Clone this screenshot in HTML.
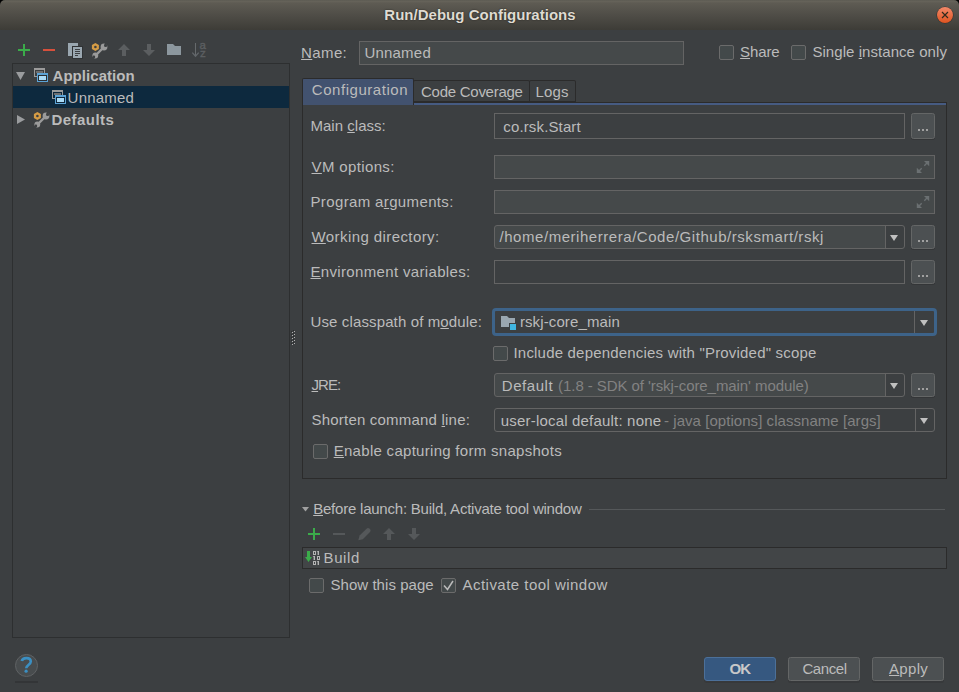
<!DOCTYPE html>
<html><head><meta charset="utf-8"><style>
html,body{margin:0;padding:0;width:959px;height:692px;overflow:hidden;background:#000;}
body{position:relative;font-family:"Liberation Sans", sans-serif;font-size:15px;}
.t{position:absolute;white-space:pre;line-height:20px;font-size:15px;}
.t u{text-decoration:underline;text-underline-offset:1px;text-decoration-thickness:1px;}
.a{position:absolute;box-sizing:border-box;}
svg{position:absolute;overflow:visible;}
</style></head><body>
<!-- title bar -->
<div class="a" style="left:0;top:0;width:959px;height:30px;border-radius:5px 5px 0 0;background:linear-gradient(#58574f 0px,#67645b 1px,#5e5b53 3px,#4e4c46 16px,#3d3c37 30px);"></div>
<!-- body -->
<div class="a" style="left:0;top:30px;width:959px;height:662px;background:#3c3f41"></div>

<!-- tree panel -->
<div class="a" style="left:12px;top:63px;width:278px;height:575px;border:1px solid #2d2f30;"></div>
<div class="a" style="left:13px;top:86px;width:276px;height:22px;background:#0d293e"></div>

<!-- splitter dots -->
<svg width="959" height="692" style="left:0;top:0">
  <g fill="#2a2c2d"><rect x="291" y="331" width="1" height="1"/><rect x="293" y="330" width="1" height="1"/><rect x="291" y="334" width="1" height="1"/><rect x="293" y="333" width="1" height="1"/><rect x="291" y="337" width="1" height="1"/><rect x="293" y="336" width="1" height="1"/><rect x="291" y="340" width="1" height="1"/><rect x="293" y="339" width="1" height="1"/><rect x="291" y="343" width="1" height="1"/><rect x="293" y="342" width="1" height="1"/></g>
  <g fill="#b0b0b0">
    <rect x="292" y="332" width="1" height="1"/><rect x="292" y="335" width="1" height="1"/><rect x="292" y="338" width="1" height="1"/><rect x="292" y="341" width="1" height="1"/><rect x="292" y="344" width="1" height="1"/>
    <rect x="294" y="331" width="1" height="1"/><rect x="294" y="334" width="1" height="1"/><rect x="294" y="337" width="1" height="1"/><rect x="294" y="340" width="1" height="1"/><rect x="294" y="343" width="1" height="1"/>
  </g>
</svg>

<!-- tabs -->
<div class="a" style="left:413px;top:80px;width:117px;height:23px;border:1px solid #2b2b2b;border-bottom:2px solid #2b2b2b;border-radius:2px 2px 0 0;background:#3c3f41"></div>
<div class="a" style="left:529px;top:80px;width:47px;height:23px;border:1px solid #2b2b2b;border-bottom:2px solid #2b2b2b;border-radius:2px 2px 0 0;background:#3c3f41"></div>
<!-- tab panel -->
<div class="a" style="left:302px;top:102px;width:645px;height:377px;border:1px solid #2b2b2b;"></div>
<div class="a" style="left:303px;top:103px;width:643px;height:2px;background:#465b82"></div>
<div class="a" style="left:302px;top:78px;width:112px;height:27px;border-left:1px solid #2b2b2b;border-top:1px solid #2b2b2b;border-right:1px solid #2b2b2b;border-radius:2px 2px 0 0;background:#42526f"></div>

<!-- name field -->
<div class="a" style="left:359px;top:41px;width:325px;height:24px;border:1px solid #646464;background:#45494a"></div>
<!-- share / single checkboxes -->
<div class="a" style="left:719px;top:45px;width:15px;height:15px;border:1px solid #6b6b6b;border-radius:2px;background:#43494a"></div>
<div class="a" style="left:791px;top:45px;width:15px;height:15px;border:1px solid #6b6b6b;border-radius:2px;background:#43494a"></div>

<!-- Main class -->
<div class="a" style="left:494px;top:113px;width:411px;height:26px;border:1px solid #646464;background:#3c3f41"></div>
<div class="a" style="left:911px;top:113px;width:24px;height:26px;border:1px solid #646666;border-radius:2.5px;background:#4c5052;box-shadow:0 1px 0 #343638"></div>
<!-- VM -->
<div class="a" style="left:494px;top:155px;width:441px;height:24px;border:1px solid #646464;background:#45494a"></div>
<!-- Program -->
<div class="a" style="left:494px;top:190px;width:441px;height:24px;border:1px solid #646464;background:#45494a"></div>
<!-- Working dir -->
<div class="a" style="left:494px;top:225px;width:411px;height:24px;border:1px solid #646464;border-radius:3px;background:linear-gradient(90deg,#45494a 390px,#646464 390px,#646464 391px,#3c3f41 391px)"></div>
<div class="a" style="left:911px;top:225px;width:24px;height:24px;border:1px solid #646666;border-radius:2.5px;background:#4c5052;box-shadow:0 1px 0 #343638"></div>
<!-- Env -->
<div class="a" style="left:494px;top:260px;width:411px;height:24px;border:1px solid #646464;background:#3c3f41"></div>
<div class="a" style="left:911px;top:260px;width:24px;height:24px;border:1px solid #646666;border-radius:2.5px;background:#4c5052;box-shadow:0 1px 0 #343638"></div>
<!-- Module combo -->
<div class="a" style="left:494px;top:310px;width:441px;height:24px;background:linear-gradient(90deg,#3c3f41 420px,#646464 420px,#646464 421px,#3c3f41 421px)"></div>
<div class="a" style="left:492px;top:308px;width:445px;height:28px;border:3px solid #3d6389;border-radius:4px;"></div>
<!-- Include checkbox -->
<div class="a" style="left:493px;top:346px;width:15px;height:15px;border:1px solid #6b6b6b;border-radius:2px;background:#43494a"></div>
<!-- JRE -->
<div class="a" style="left:494px;top:373px;width:411px;height:24px;border:1px solid #646464;border-radius:3px;background:linear-gradient(90deg,#45494a 390px,#646464 390px,#646464 391px,#3c3f41 391px)"></div>
<div class="a" style="left:911px;top:373px;width:24px;height:24px;border:1px solid #646666;border-radius:2.5px;background:#4c5052;box-shadow:0 1px 0 #343638"></div>
<!-- Shorten -->
<div class="a" style="left:494px;top:408px;width:441px;height:24px;border:1px solid #646464;border-radius:3px;background:linear-gradient(90deg,#3c3f41 420px,#646464 420px,#646464 421px,#3c3f41 421px)"></div>
<!-- Enable checkbox -->
<div class="a" style="left:313px;top:444px;width:15px;height:15px;border:1px solid #6b6b6b;border-radius:2px;background:#43494a"></div>

<!-- before launch list -->
<div class="a" style="left:589px;top:509px;width:356px;height:1px;background:#55585a"></div>
<div class="a" style="left:302px;top:547px;width:645px;height:22px;border:1px solid #2b2b2b;background:#424547"></div>
<div class="a" style="left:309px;top:578px;width:15px;height:15px;border:1px solid #6b6b6b;border-radius:2px;background:#43494a"></div>
<div class="a" style="left:441px;top:578px;width:15px;height:15px;border:1px solid #6b6b6b;border-radius:2px;background:#43494a"></div>

<!-- buttons -->
<div class="a" style="left:704px;top:657px;width:72px;height:24px;border:1px solid #4c7099;border-radius:3px;background:#365880;box-shadow:0 2px 0 #37393b"></div>
<div class="a" style="left:788px;top:657px;width:72px;height:24px;border:1px solid #646666;border-radius:2.5px;background:#4c5052;box-shadow:0 2px 0 #37393b"></div>
<div class="a" style="left:872px;top:657px;width:72px;height:24px;border:1px solid #646666;border-radius:2.5px;background:#4c5052;box-shadow:0 2px 0 #37393b"></div>

<!-- help -->
<div class="a" style="left:15px;top:654px;width:23px;height:23px;border:1px solid #5f6264;border-radius:50%;background:#484c4e"></div>
<div class="a" style="left:15px;top:681px;width:23px;height:2px;background:#333537"></div>

<!-- icons -->
<svg width="959" height="692" style="left:0;top:0">
  <!-- close button -->
  <defs>
    <linearGradient id="cg" x1="0" y1="0" x2="0" y2="1"><stop offset="0" stop-color="#f2896a"/><stop offset="1" stop-color="#df5420"/></linearGradient>
  </defs>
  <circle cx="945" cy="15" r="8.6" fill="#2e2d2a" opacity="0.8"/>
  <circle cx="945" cy="15" r="8" fill="url(#cg)"/>
  <path d="M942 12 L948 18 M948 12 L942 18" stroke="#2e2a1c" stroke-width="1.15"/>

  <!-- toolbar -->
  <rect x="18" y="49" width="12" height="2" fill="#3bac4a"/><rect x="23" y="44" width="2" height="12" fill="#3bac4a"/>
  <rect x="43" y="49" width="12" height="2" fill="#d6503c"/>
  <!-- copy -->
  <rect x="68" y="43" width="10" height="13" fill="#9aa7b0"/>
  <rect x="72" y="46" width="11" height="13" fill="#2f3234"/>
  <rect x="73" y="47" width="9" height="11" fill="#9aa7b0"/>
  <rect x="75" y="49" width="5" height="1" fill="#3c3f41"/><rect x="75" y="51" width="5" height="1" fill="#3c3f41"/><rect x="75" y="53" width="5" height="1" fill="#3c3f41"/><rect x="75" y="55" width="3" height="1" fill="#3c3f41"/>
  <!-- wrench + nut (toolbar) -->
  <g id="wr">
    <path d="M96 55 L103.5 47.5" stroke="#9a9a9a" stroke-width="2.4"/>
    <circle cx="104" cy="47" r="3.4" fill="#9a9a9a"/>
    <circle cx="105.6" cy="45.4" r="1.6" fill="#3c3f41"/>
    <path d="M105 44.6 L108 41.6" stroke="#3c3f41" stroke-width="2"/>
    <circle cx="95.3" cy="55.5" r="2.9" fill="#9a9a9a"/>
    <circle cx="93.9" cy="56.9" r="1.3" fill="#3c3f41"/>
    <path d="M94.4 56.4 L91.5 59.3" stroke="#3c3f41" stroke-width="1.8"/>
    <path d="M95.4 43 L98.9 45 L98.9 49 L95.4 51 L91.9 49 L91.9 45 Z" fill="#d69c45"/>
    <circle cx="95.4" cy="47" r="1.3" fill="#3c3f41"/>
  </g>
  <!-- up / down arrows (disabled) -->
  <path d="M124 44 L130 50 L126 50 L126 56 L122 56 L122 50 L118 50 Z" fill="#5b5e60"/>
  <path d="M149 56 L155 50 L151 50 L151 44 L147 44 L147 50 L143 50 Z" fill="#5b5e60"/>
  <!-- folder -->
  <path d="M167 44 L173 44 L175 46 L181 46 L181 55 L167 55 Z" fill="#8c979e"/>
  <!-- sort az -->
  <path d="M195.5 43 L195.5 56" stroke="#666a6c" stroke-width="1"/>
  <path d="M192.3 52.6 L195.5 56.2 L198.7 52.6" stroke="#62666a" stroke-width="1.3" fill="none"/>
  <text x="199.6" y="49.2" font-family="Liberation Sans" font-size="11.5" fill="#5c5f62" stroke="#5c5f62" stroke-width="0.35">a</text>
  <text x="199.9" y="57.2" font-family="Liberation Sans" font-size="11.5" fill="#5c5f62" stroke="#5c5f62" stroke-width="0.35">z</text>

  <!-- tree icons -->
  <path d="M16 72 L25 72 L20.5 80 Z" fill="#9a9c9e"/>
  <path d="M17 115 L25 119.5 L17 124 Z" fill="#9a9c9e"/>
  <g id="app">
    <rect x="34" y="68" width="11" height="9" fill="#9b9b9b"/>
    <rect x="35" y="70" width="9" height="6" fill="#3c3f41"/>
    <rect x="36" y="71" width="7" height="2" fill="#6e6e6e"/>
    <rect x="37" y="73" width="11" height="9" fill="#5ba3d6"/>
    <rect x="38" y="75" width="9" height="6" fill="#2b2f33"/>
    <rect x="39" y="76" width="7" height="4" fill="#a9dbf7"/>
  </g>
  <g transform="translate(18,22)">
    <rect x="34" y="68" width="11" height="9" fill="#9b9b9b"/>
    <rect x="35" y="70" width="9" height="6" fill="#0d293e"/>
    <rect x="36" y="71" width="7" height="2" fill="#6e6e6e"/>
    <rect x="37" y="73" width="11" height="9" fill="#5ba3d6"/>
    <rect x="38" y="75" width="9" height="6" fill="#10263a"/>
    <rect x="39" y="76" width="7" height="4" fill="#a9dbf7"/>
  </g>
  <g transform="translate(-58,69)">
    <path d="M96 55 L103.5 47.5" stroke="#9a9a9a" stroke-width="2.4"/>
    <circle cx="104" cy="47" r="3.4" fill="#9a9a9a"/>
    <circle cx="105.6" cy="45.4" r="1.6" fill="#3c3f41"/>
    <path d="M105 44.6 L108 41.6" stroke="#3c3f41" stroke-width="2"/>
    <circle cx="95.3" cy="55.5" r="2.9" fill="#9a9a9a"/>
    <circle cx="93.9" cy="56.9" r="1.3" fill="#3c3f41"/>
    <path d="M94.4 56.4 L91.5 59.3" stroke="#3c3f41" stroke-width="1.8"/>
    <path d="M95.4 43 L98.9 45 L98.9 49 L95.4 51 L91.9 49 L91.9 45 Z" fill="#d69c45"/>
    <circle cx="95.4" cy="47" r="1.3" fill="#3c3f41"/>
  </g>

  <!-- expand icons -->
  <g fill="#6b7072"><path d="M924 161 L929.2 161 L929.2 166.2 Z M916.8 167.8 L916.8 173 L922 173 Z"/><path d="M924 196 L929.2 196 L929.2 201.2 Z M916.8 202.8 L916.8 208 L922 208 Z"/></g>
  <g stroke="#6b7072" stroke-width="1.4"><path d="M924.3 165.7 L927.2 162.8 M921.7 168.3 L918.8 171.2 M924.3 200.7 L927.2 197.8 M921.7 203.3 L918.8 206.2"/></g>
  <!-- combo triangles -->
  <path d="M890 235 L898 235 L894 241 Z" fill="#c0c0c0"/>
  <path d="M920 320 L928 320 L924 326 Z" fill="#c0c0c0"/>
  <path d="M890 383 L898 383 L894 389 Z" fill="#c0c0c0"/>
  <path d="M920 418 L928 418 L924 424 Z" fill="#c0c0c0"/>
  <!-- ... dots -->
  <g fill="#a0a0a0">
    <rect x="918" y="129" width="2" height="2"/><rect x="922" y="129" width="2" height="2"/><rect x="926" y="129" width="2" height="2"/>
    <rect x="918" y="240" width="2" height="2"/><rect x="922" y="240" width="2" height="2"/><rect x="926" y="240" width="2" height="2"/>
    <rect x="918" y="275" width="2" height="2"/><rect x="922" y="275" width="2" height="2"/><rect x="926" y="275" width="2" height="2"/>
    <rect x="918" y="388" width="2" height="2"/><rect x="922" y="388" width="2" height="2"/><rect x="926" y="388" width="2" height="2"/>
  </g>
  <!-- module folder icon -->
  <path d="M501 316 L507 316 L509 318 L515 318 L515 327 L501 327 Z" fill="#9aa7b0"/>
  <rect x="509" y="323" width="7" height="7" fill="#3c3f41"/>
  <rect x="510" y="324" width="6" height="6" fill="#40b6e0"/>

  <!-- before launch -->
  <path d="M302 507 L309 507 L305.5 511.5 Z" fill="#a0a0a0"/>
  <rect x="308" y="533" width="12" height="2" fill="#3bac4a"/><rect x="313" y="528" width="2" height="12" fill="#3bac4a"/>
  <rect x="333" y="533" width="12" height="2" fill="#55585a"/>
  <path d="M358.3 540.2 L359.6 535.6 L366.8 528.4 Q368 527.4 369.4 528.6 L370.2 529.4 Q371.2 530.8 370 532 L362.8 539.2 Z" fill="#55585a"/>
  <path d="M389 528 L395 534 L391 534 L391 540 L387 540 L387 534 L383 534 Z" fill="#55585a"/>
  <path d="M414 540 L420 534 L416 534 L416 528 L412 528 L412 534 L408 534 Z" fill="#55585a"/>
  <!-- build icon -->
  <path d="M307 551 L310 551 L310 557 L312 557 L308.5 562 L305 557 L307 557 Z" fill="#3bac4a"/>
  <g fill="#b4b4b4"><path d="M313 551h3v4h-3z M314 552h1v2h-1z" fill-rule="evenodd"/><rect x="317.6" y="551" width="1.4" height="4"/><rect x="316.90000000000003" y="551" width="0.8" height="1"/><rect x="313.6" y="556" width="1.4" height="4"/><rect x="312.90000000000003" y="556" width="0.8" height="1"/><path d="M317 556h3v4h-3z M318 557h1v2h-1z" fill-rule="evenodd"/><path d="M313 561h3v4h-3z M314 562h1v2h-1z" fill-rule="evenodd"/><rect x="317.6" y="561" width="1.4" height="4"/><rect x="316.90000000000003" y="561" width="0.8" height="1"/></g>
  <!-- check mark -->
  <path d="M444 585.5 L447.5 589.5 L453 581" stroke="#bbbbbb" stroke-width="1.5" fill="none"/>
  <!-- help ? -->
  <path d="M21.8 661 C22.5 657.3, 30.8 656.8, 30.8 661.6 C30.8 664.6, 26.4 664.8, 26.2 668.3" stroke="#3b8fc2" stroke-width="2.6" fill="none"/><circle cx="26.1" cy="671.2" r="1.6" fill="#3b8fc2"/>
</svg>

<div class="t" style="left:384.30px;top:5px;letter-spacing:0.023px;color:#dfdbd2;font-weight:bold;text-shadow:0 0 1.5px rgba(20,18,15,0.9);">Run/Debug Configurations</div>
<div class="t" style="left:52.50px;top:66px;letter-spacing:0.050px;color:#bbbbbb;font-weight:bold;">Application</div>
<div class="t" style="left:67.60px;top:88px;letter-spacing:0.217px;color:#bbbbbb;">Unnamed</div>
<div class="t" style="left:51.50px;top:110px;letter-spacing:0.452px;color:#bbbbbb;font-weight:bold;">Defaults</div>
<div class="t" style="left:301.10px;top:43px;letter-spacing:0.372px;color:#bbbbbb;"><u>N</u>ame:</div>
<div class="t" style="left:364.40px;top:43px;letter-spacing:0.217px;color:#bbbbbb;">Unnamed</div>
<div class="t" style="left:740.10px;top:42px;letter-spacing:-0.121px;color:#bbbbbb;"><u>S</u>hare</div>
<div class="t" style="left:812.40px;top:42px;letter-spacing:0.057px;color:#bbbbbb;">Single <u>i</u>nstance only</div>
<div class="t" style="left:311.80px;top:80px;letter-spacing:0.543px;color:#bbbbbb;">Configuration</div>
<div class="t" style="left:421.00px;top:82px;letter-spacing:-0.260px;color:#bbbbbb;">Code Coverage</div>
<div class="t" style="left:535.60px;top:82px;letter-spacing:0.091px;color:#bbbbbb;">Logs</div>
<div class="t" style="left:310.50px;top:116px;letter-spacing:0.015px;color:#bbbbbb;">Main <u>c</u>lass:</div>
<div class="t" style="left:503.30px;top:117px;letter-spacing:0.138px;color:#bbbbbb;">co.rsk.Start</div>
<div class="t" style="left:311.50px;top:157px;letter-spacing:0.366px;color:#bbbbbb;"><u>V</u>M options:</div>
<div class="t" style="left:310.50px;top:192px;letter-spacing:0.362px;color:#bbbbbb;">Program a<u>r</u>guments:</div>
<div class="t" style="left:311.50px;top:227px;letter-spacing:0.416px;color:#bbbbbb;"><u>W</u>orking directory:</div>
<div class="t" style="left:499.50px;top:227px;letter-spacing:0.545px;color:#bbbbbb;">/home/meriherrera/Code/Github/rsksmart/rskj</div>
<div class="t" style="left:310.50px;top:262px;letter-spacing:0.338px;color:#bbbbbb;"><u>E</u>nvironment variables:</div>
<div class="t" style="left:310.50px;top:312px;letter-spacing:0.128px;color:#bbbbbb;">Use classpath of m<u>o</u>dule:</div>
<div class="t" style="left:519.90px;top:312px;letter-spacing:0.114px;color:#bbbbbb;">rskj-core_main</div>
<div class="t" style="left:513.50px;top:343px;letter-spacing:0.191px;color:#bbbbbb;">Include dependencies with &quot;Provided&quot; scope</div>
<div class="t" style="left:311.50px;top:375px;letter-spacing:-0.912px;color:#bbbbbb;"><u>J</u>RE:</div>
<div class="t" style="left:501.80px;top:376px;letter-spacing:0.557px;color:#bbbbbb;">Default</div>
<div class="t" style="left:558.10px;top:376px;letter-spacing:-0.071px;color:#828282;">(1.8 - SDK of &#x27;rskj-core_main&#x27; module)</div>
<div class="t" style="left:311.50px;top:410px;letter-spacing:0.206px;color:#bbbbbb;">Shorten command <u>l</u>ine:</div>
<div class="t" style="left:500.80px;top:411px;letter-spacing:0.187px;color:#bbbbbb;">user-local default: none</div>
<div class="t" style="left:664.00px;top:411px;letter-spacing:0.052px;color:#828282;">- java [options] classname [args]</div>
<div class="t" style="left:333.70px;top:441px;letter-spacing:0.290px;color:#bbbbbb;"><u>E</u>nable capturing form snapshots</div>
<div class="t" style="left:313.20px;top:499px;letter-spacing:-0.221px;color:#bbbbbb;"><u>B</u>efore launch: Build, Activate tool window</div>
<div class="t" style="left:323.50px;top:548px;letter-spacing:0.622px;color:#bbbbbb;">Build</div>
<div class="t" style="left:330.50px;top:575px;letter-spacing:0.044px;color:#bbbbbb;">Show this page</div>
<div class="t" style="left:462.50px;top:575px;letter-spacing:0.470px;color:#bbbbbb;">Activate tool window</div>
<div class="t" style="left:729.60px;top:659px;letter-spacing:-0.967px;color:#c8c8c8;font-weight:bold;">OK</div>
<div class="t" style="left:802.40px;top:659px;letter-spacing:-0.392px;color:#bbbbbb;">Cancel</div>
<div class="t" style="left:889.00px;top:659px;letter-spacing:0.320px;color:#bbbbbb;"><u>A</u>pply</div>
</body></html>
